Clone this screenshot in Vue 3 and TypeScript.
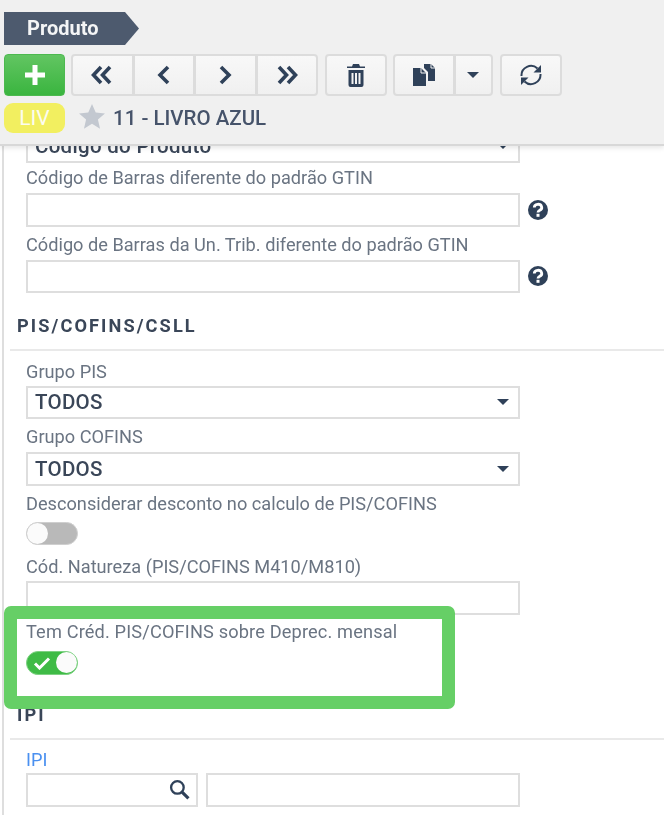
<script setup lang="ts">
const navIcons = [
  ["M11 4l-7.500 8 7.500 8", "M20 4l-7.500 8 7.500 8"],
  ["M16 4l-8 8 8 8"],
  ["M8 4l8 8-8 8"],
  ["M4 4l7.500 8-7.500 8", "M13 4l7.500 8-7.500 8"],
];
</script>

<template>
  <div class="page">
    <header class="topbar">
      <div class="tab">Produto</div>
      <div class="toolbar">
        <button class="btn btn-add" aria-label="Novo">
          <svg width="22" height="22" viewBox="0 0 22 22"><path d="M11 1v20M1 11h20" stroke="#fff" stroke-width="5" /></svg>
        </button>
        <div class="group nav">
          <button v-for="(icon, i) in navIcons" :key="i" class="btn">
            <svg width="24" height="24" viewBox="0 0 24 24" fill="none" stroke="#2f4159" stroke-width="3.600">
              <path v-for="d in icon" :key="d" :d="d" />
            </svg>
          </button>
        </div>
        <button class="btn single" aria-label="Excluir">
          <svg width="18" height="23" viewBox="0 0 18 23">
            <path d="M6 0h6l1 2.500h5v1.500H0V2.500h5z" fill="#2f4159" />
            <path fill-rule="evenodd" d="M1.500 6h15v15a2 2 0 0 1-2 2h-11a2 2 0 0 1-2-2zM4.500 9v11h2V9zM8 9v11h2V9zM11.500 9v11h2V9z" fill="#2f4159" />
          </svg>
        </button>
        <div class="group copy">
          <button class="btn" aria-label="Copiar">
            <svg width="24" height="22" viewBox="0 0 24 22">
              <path d="M12 0h7l4 4v13h-7V8l-4-4z" fill="#2f4159" />
              <path d="M1 4h8l5 5v13H1z" fill="#2f4159" />
              <path d="M9 4v5h5M19 0v4h4" fill="none" stroke="#f4f4f4" stroke-width="1" />
            </svg>
          </button>
          <button class="btn caret-btn" aria-label="Mais"><span class="caret"></span></button>
        </div>
        <button class="btn single refresh" aria-label="Atualizar">
          <svg width="24" height="24" viewBox="0 0 24 24" fill="none" stroke="#2f4159" stroke-width="2">
            <path d="M2.500 13a9.500 9.500 0 0 1 16-7.500" />
            <path d="M21.500 11a9.500 9.500 0 0 1-16 7.500" />
            <path d="M22 2v7.500h-7.500z" fill="#2f4159" stroke="none" />
            <path d="M2 22v-7.500h7.500z" fill="#2f4159" stroke="none" />
          </svg>
        </button>
      </div>
      <div class="record">
        <span class="pill">LIV</span>
        <svg class="star" width="26" height="25" viewBox="0 0 28 27">
          <path d="M14 0l4 9.300 10 .9-7.600 6.600 2.300 9.800L14 21.400l-8.700 5.200 2.300-9.800L0 10.200l10-.9z" fill="#c3c8d0" />
        </svg>
        <span class="record-name">11 - LIVRO AZUL</span>
      </div>
    </header>

    <main class="content">
      <div class="fields clipped">
        <div class="control select"><span>Código do Produto</span><i class="arrow"></i></div>
      </div>
      <div class="fields">
        <label class="label first">Código de Barras diferente do padrão GTIN</label>
        <div class="with-help">
          <div class="control"></div>
          <svg class="help" width="20" height="20" viewBox="0 0 20 20">
            <circle cx="10" cy="10" r="10" fill="#2f4159" />
            <path d="M6.300 7.500a3.700 3.200 0 1 1 5.200 2.900c-1 .6-1.500 1-1.500 2" fill="none" stroke="#fff" stroke-width="2.800" />
            <rect x="8.500" y="13.800" width="3" height="3" fill="#fff" />
          </svg>
        </div>
        <label class="label">Código de Barras da Un. Trib. diferente do padrão GTIN</label>
        <div class="with-help">
          <div class="control"></div>
          <svg class="help" width="20" height="20" viewBox="0 0 20 20">
            <circle cx="10" cy="10" r="10" fill="#2f4159" />
            <path d="M6.300 7.500a3.700 3.200 0 1 1 5.200 2.900c-1 .6-1.500 1-1.500 2" fill="none" stroke="#fff" stroke-width="2.800" />
            <rect x="8.500" y="13.800" width="3" height="3" fill="#fff" />
          </svg>
        </div>
      </div>

      <h2 class="section pis">PIS/COFINS/CSLL</h2>
      <div class="fields">
        <label class="label tight">Grupo PIS</label>
        <div class="control select"><span>TODOS</span><i class="arrow"></i></div>
        <label class="label">Grupo COFINS</label>
        <div class="control select"><span>TODOS</span><i class="arrow"></i></div>
        <label class="label">Desconsiderar desconto no calculo de PIS/COFINS</label>
        <div class="toggle off"><span class="knob"></span></div>
        <label class="label natureza">Cód. Natureza (PIS/COFINS M410/M810)</label>
        <div class="control"></div>
        <label class="label credito">Tem Créd. PIS/COFINS sobre Deprec. mensal</label>
        <div class="toggle on">
          <svg width="18" height="14" viewBox="0 0 18 14"><path d="M2 7.500l4.500 4.500L16 2.500" fill="none" stroke="#fff" stroke-width="3" /></svg>
          <span class="knob"></span>
        </div>
      </div>

      <h2 class="section ipi">IPI</h2>
      <div class="fields">
        <label class="label link">IPI</label>
        <div class="ipi-row">
          <div class="control search">
            <svg width="21" height="21" viewBox="0 0 20 20" fill="none" stroke="#2f4159">
              <circle cx="8" cy="8" r="6" stroke-width="2.200" />
              <path d="M12.500 12.500l6 6" stroke-width="3" />
            </svg>
          </div>
          <div class="control grow"></div>
        </div>
      </div>

      <div class="highlight"></div>
    </main>
  </div>
</template>

<style scoped>
.page {
  position: relative;
  width: 664px;
  height: 815px;
  overflow: hidden;
  background: #fff;
  font-family: Roboto, "Liberation Sans", sans-serif;
  color: #667080;
}

.topbar {
  position: relative;
  z-index: 2;
  height: 146px;
  box-sizing: border-box;
  padding: 12px 0 0 4px;
  background: #f0f0f0;
  border-bottom: 2px solid #d8d8d8;
  box-shadow: 0 2px 5px rgba(0, 0, 0, 0.1);
}

/* the reference is a slightly soft upscaled capture */
.tab,
.toolbar,
.record,
.fields,
.section {
  filter: blur(0.35px);
}

.tab {
  width: 135px;
  height: 33px;
  box-sizing: border-box;
  padding-left: 23px;
  background: #4d5a6e;
  clip-path: polygon(0 0, 121px 0, 135px 50%, 121px 100%, 0 100%);
  color: #f4f5f6;
  font-size: 20px;
  font-weight: 700;
  line-height: 32px;
}

.toolbar {
  display: flex;
  gap: 6px;
  margin-top: 9px;
}

.btn {
  display: flex;
  align-items: center;
  justify-content: center;
  padding: 0;
  width: 62px;
  height: 42px;
  box-sizing: border-box;
  background: linear-gradient(#f8f8f8, #f0f0f0);
  border: 2px solid #dcdcdc;
  border-radius: 4px;
}

.btn-add {
  width: 61px;
  background: linear-gradient(#62c562, #3ab53f);
  border: 1px solid #4cb94f;
}

.group {
  display: flex;
}

.group .btn {
  border-radius: 0;
  margin-left: -1px;
}

.group .btn:first-child {
  margin-left: 0;
  border-radius: 4px 0 0 4px;
}

.group .btn:last-child {
  border-radius: 0 4px 4px 0;
}

.nav {
  width: 247px;
}

.nav .btn {
  width: 62.500px;
}

.single {
  margin-left: 0.500px;
}

.copy .caret-btn {
  width: 39px;
}

.refresh {
  margin-left: 1px;
}

.caret {
  width: 0;
  height: 0;
  border: 6px solid transparent;
  border-top: 6px solid #2f4159;
  border-bottom: 0;
}

.record {
  display: flex;
  align-items: center;
  margin-top: 7px;
}

.pill {
  width: 61px;
  height: 30px;
  background: #f2ef60;
  border-radius: 9px;
  color: #fcfcf0;
  font-size: 21px;
  line-height: 30px;
  text-align: center;
}

.star {
  margin: -4px 0 0 14px;
}

.record-name {
  margin-left: 8px;
  color: #46536a;
  font-size: 20.500px;
  font-weight: 500;
}

.content {
  position: relative;
  height: 690px;
  margin-left: 2px;
  border-left: 2px solid #dedede;
}

.fields {
  padding-left: 22px;
  width: 494px;
}

.clipped {
  margin-top: -16.500px;
}

.label {
  display: block;
  height: 17px;
  margin: 9px 0 7px;
  color: #6a7482;
  font-size: 18.200px;
  line-height: 17px;
  white-space: nowrap;
}

.first {
  margin-top: 6px;
}

.tight {
  margin-top: 11.500px;
  margin-bottom: 6px;
}

.control {
  display: flex;
  align-items: center;
  height: 33.500px;
  box-sizing: border-box;
  width: 494px;
  border: 2px solid #dedede;
  background: #fff;
}

.select {
  justify-content: space-between;
  padding: 0 9px 0 7px;
  color: #3a4658;
  font-size: 20.500px;
  font-weight: 500;
  letter-spacing: 0.300px;
}

.arrow {
  width: 0;
  height: 0;
  border: 6px solid transparent;
  border-top: 6px solid #2f4159;
  border-bottom: 0;
}

.with-help {
  display: flex;
  align-items: center;
  gap: 8px;
  width: 540px;
}

.help {
  flex: none;
}

.section {
  margin: 0 0 0 6px;
  padding-left: 7px;
  color: #3a4658;
  font-size: 18.200px;
  font-weight: 700;
  letter-spacing: 2.100px;
  line-height: 24px;
  border-bottom: 2px solid #e9e9e9;
}

.pis {
  margin-top: 20.500px;
  padding-bottom: 11.500px;
}

.ipi {
  margin-top: 28.500px;
  padding-bottom: 10.500px;
}

.toggle {
  display: flex;
  align-items: center;
  justify-content: flex-start;
  width: 52px;
  height: 23.500px;
  box-sizing: border-box;
  background: #b9b9b9;
  border: 1px solid #cfcfcf;
  border-radius: 12px;
}

.off {
  margin-top: 10px;
}

.knob {
  width: 21px;
  height: 21px;
  border-radius: 50%;
  background: #fbfbfb;
}

.toggle.on {
  justify-content: space-between;
  padding-left: 6px;
  background: #3fbb46;
  border-color: #7ed183;
}

.natureza {
  margin-top: 13px;
  margin-bottom: 6px;
}

.credito {
  margin-top: 8px;
  margin-bottom: 11.500px;
  letter-spacing: 0.150px;
}

.link {
  margin-top: 11px;
  margin-bottom: 5.500px;
  color: #4a90f0;
}

.ipi-row {
  display: flex;
  gap: 8px;
}

.search {
  flex: none;
  width: 172px;
  justify-content: flex-end;
  padding-right: 6px;
}

.grow {
  width: 314px;
}

.highlight {
  position: absolute;
  left: 0;
  top: 476px;
  width: 451px;
  height: 103px;
  box-sizing: border-box;
  border: 13px solid #66cf66;
  border-radius: 7px;
}
</style>
